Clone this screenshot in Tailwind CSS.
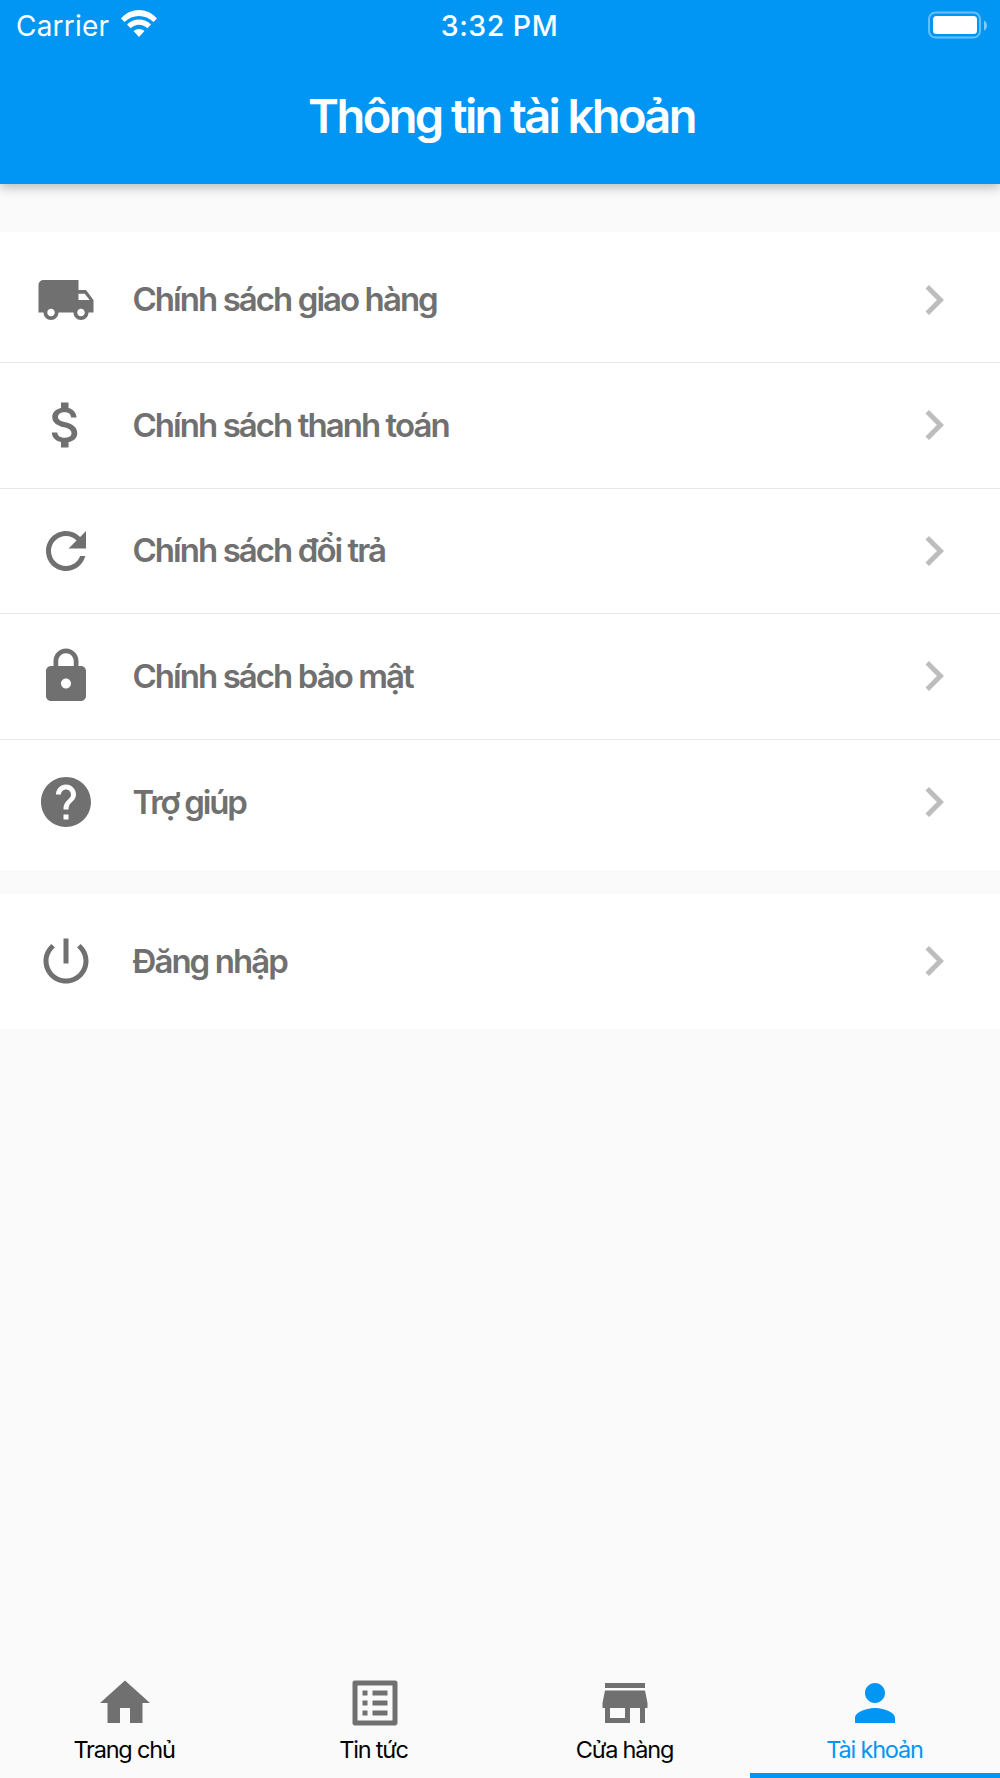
<!DOCTYPE html>
<html lang="vi">
<head>
<meta charset="utf-8">
<title>Thông tin tài khoản</title>
<script src="https://cdn.jsdelivr.net/npm/@tailwindcss/browser@4"></script>
</head>
<body class="w-[1000px] h-[1778px] overflow-hidden bg-[#fafafa] flex flex-col font-['Inter','Roboto',sans-serif] text-[#707070]">
  <header class="h-[183.5px] shrink-0 bg-[#0196f3] text-white shadow-[0_4px_10px_rgba(0,0,0,0.24)] flex flex-col">
    <div class="h-[48px] grid grid-cols-3 items-center pl-[16px] pr-[13px]">
      <div class="flex items-center gap-3">
        <span class="text-[28px] leading-[48px] pt-px tracking-[0.2px]">Carrier</span>
        <svg class="w-[36px] h-[27px] -mt-[3px]" viewBox="0 0 36 27" fill="currentColor"><path d="M0 8.400C10-2.800 26-2.800 36 8.400L32.500 12C24.500 3.900 11.500 3.900 3.500 12ZM6 14.600C12.500 7.900 23.500 7.900 30 14.600L26.400 18.200C21.500 13.500 14.500 13.500 9.600 18.200ZM12.500 21C15.500 18.200 20.500 18.200 23.500 21L18 27Z"/></svg>
      </div>
      <div class="text-center pr-[4px] pt-[2px]"><span class="text-[28.5px] leading-[48px] font-medium tracking-[0.5px]">3:32 PM</span></div>
      <svg class="w-[60px] h-[28px] justify-self-end" viewBox="0 0 60 28"><rect x="2" y="1.500" width="51" height="25" rx="6.500" fill="none" stroke="#fff" stroke-opacity=".4" stroke-width="2"/><rect x="6" y="5" width="44" height="18" rx="3.500" fill="#fff"/><path d="M57 9.500q3 1.500 3 5t-3 5z" fill="#fff" fill-opacity=".5"/></svg>
    </div>
    <h1 class="text-center text-[47px] leading-[136px] font-[560] tracking-[-2.6px] pl-[3px]">Thông tin tài khoản</h1>
  </header>

  <main class="flex-1 pt-[48.500px]">
    <ul class="bg-white pt-[5.5px] h-[638px] text-[33px] font-semibold tracking-[-1.95px]">
      <li class="h-[125.500px] border-b border-[#e8e8e8] flex items-center pl-[36px] pr-[36.4px]">
        <svg class="size-[60px]" viewBox="0 0 24 24" fill="currentColor"><path d="M20 8h-3V4H3c-1.100 0-2 .9-2 2v11h2c0 1.660 1.340 3 3 3s3-1.340 3-3h6c0 1.660 1.340 3 3 3s3-1.340 3-3h2v-5l-3-4zM6 18.500c-.83 0-1.500-.67-1.500-1.500s.67-1.500 1.500-1.500 1.500.67 1.500 1.500-.67 1.500-1.500 1.500zm13.500-9l1.960 2.500H17V9.500h2.500zm-1.500 9c-.83 0-1.500-.67-1.500-1.500s.67-1.500 1.500-1.500 1.500.67 1.500 1.500-.67 1.500-1.500 1.500z"/></svg>
        <span class="ml-[36.5px]">Chính sách giao hàng</span>
        <svg class="size-[60px] ml-auto text-[#bdbdbd]" viewBox="0 0 24 24" fill="currentColor"><path d="M10 6L8.590 7.410 13.170 12l-4.580 4.590L10 18l6-6z"/></svg>
      </li>
      <li class="h-[125.500px] border-b border-[#e8e8e8] flex items-center pl-[36px] pr-[36.4px]">
        <svg class="size-[60px]" viewBox="0 0 24 24" fill="currentColor"><path d="M11.800 10.900c-2.270-.59-3-1.200-3-2.150 0-1.090 1.010-1.850 2.700-1.850 1.780 0 2.440.85 2.500 2.100h2.210c-.07-1.720-1.120-3.300-3.210-3.810V3h-3v2.160c-1.940.42-3.500 1.680-3.500 3.610 0 2.310 1.910 3.460 4.700 4.130 2.500.6 3 1.480 3 2.410 0 .69-.49 1.790-2.700 1.790-2.060 0-2.870-.92-2.980-2.100h-2.200c.12 2.190 1.760 3.420 3.680 3.830V21h3v-2.150c1.950-.37 3.500-1.500 3.500-3.550 0-2.840-2.430-3.810-4.700-4.400z"/></svg>
        <span class="ml-[36.5px]">Chính sách thanh toán</span>
        <svg class="size-[60px] ml-auto text-[#bdbdbd]" viewBox="0 0 24 24" fill="currentColor"><path d="M10 6L8.590 7.410 13.170 12l-4.580 4.590L10 18l6-6z"/></svg>
      </li>
      <li class="h-[125.500px] border-b border-[#e8e8e8] flex items-center pl-[36px] pr-[36.4px]">
        <svg class="size-[60px]" viewBox="0 0 24 24" fill="currentColor"><path d="M17.650 6.350C16.200 4.900 14.210 4 12 4c-4.420 0-7.990 3.580-7.990 8s3.570 8 7.990 8c3.730 0 6.840-2.550 7.730-6h-2.080c-.82 2.330-3.040 4-5.650 4-3.310 0-6-2.690-6-6s2.690-6 6-6c1.660 0 3.140.69 4.220 1.780L13 11h7V4l-2.350 2.350z"/></svg>
        <span class="ml-[36.5px]">Chính sách đổi trả</span>
        <svg class="size-[60px] ml-auto text-[#bdbdbd]" viewBox="0 0 24 24" fill="currentColor"><path d="M10 6L8.590 7.410 13.170 12l-4.580 4.590L10 18l6-6z"/></svg>
      </li>
      <li class="h-[125.500px] border-b border-[#e8e8e8] flex items-center pl-[36px] pr-[36.4px]">
        <svg class="size-[60px]" viewBox="0 0 24 24" fill="currentColor"><path d="M18 8h-1V6c0-2.760-2.240-5-5-5S7 3.240 7 6v2H6c-1.100 0-2 .9-2 2v10c0 1.100.9 2 2 2h12c1.100 0 2-.9 2-2V10c0-1.100-.9-2-2-2zm-6 9c-1.100 0-2-.9-2-2s.9-2 2-2 2 .9 2 2-.9 2-2 2zm3.100-9H8.900V6c0-1.710 1.390-3.100 3.100-3.100s3.100 1.390 3.100 3.100v2z"/></svg>
        <span class="ml-[36.5px]">Chính sách bảo mật</span>
        <svg class="size-[60px] ml-auto text-[#bdbdbd]" viewBox="0 0 24 24" fill="currentColor"><path d="M10 6L8.590 7.410 13.170 12l-4.580 4.590L10 18l6-6z"/></svg>
      </li>
      <li class="h-[125.500px] flex items-center pl-[36px] pr-[36.4px]">
        <svg class="size-[60px]" viewBox="0 0 24 24" fill="currentColor"><path d="M12 2C6.480 2 2 6.480 2 12s4.480 10 10 10 10-4.480 10-10S17.520 2 12 2zm1 17h-2v-2h2v2zm2.070-7.750l-.9.920C13.450 12.900 13 13.500 13 15h-2v-.5c0-1.100.45-2.100 1.170-2.830l1.240-1.260c.37-.36.59-.86.59-1.410 0-1.100-.9-2-2-2s-2 .9-2 2H8c0-2.210 1.790-4 4-4s4 1.790 4 4c0 .88-.36 1.680-.93 2.250z"/></svg>
        <span class="ml-[36.5px] tracking-[-2.2px]">Trợ giúp</span>
        <svg class="size-[60px] ml-auto text-[#bdbdbd]" viewBox="0 0 24 24" fill="currentColor"><path d="M10 6L8.590 7.410 13.170 12l-4.580 4.590L10 18l6-6z"/></svg>
      </li>
    </ul>
    <ul class="mt-[23.500px] bg-white h-[135.500px] text-[33px] font-semibold tracking-[-1.95px]">
      <li class="h-full flex items-center pl-[36px] pr-[36.4px]">
        <svg class="size-[60px]" viewBox="0 0 24 24" fill="currentColor"><path d="M13 3h-2v10h2V3zm4.830 2.170l-1.420 1.420C17.990 7.860 19 9.810 19 12c0 3.870-3.130 7-7 7s-7-3.130-7-7c0-2.190 1.010-4.140 2.580-5.420L6.170 5.170C4.230 6.820 3 9.260 3 12c0 4.970 4.030 9 9 9s9-4.030 9-9c0-2.740-1.230-5.180-3.170-6.830z"/></svg>
        <span class="ml-[36.5px]">Đăng nhập</span>
        <svg class="size-[60px] ml-auto text-[#bdbdbd]" viewBox="0 0 24 24" fill="currentColor"><path d="M10 6L8.590 7.410 13.170 12l-4.580 4.590L10 18l6-6z"/></svg>
      </li>
    </ul>
  </main>

  <nav class="h-[105px] shrink-0 grid grid-cols-4 text-[23.500px] leading-[34px] tracking-[-1.2px]">
    <a class="flex flex-col items-center">
      <svg class="size-[60px]" viewBox="0 0 24 24" fill="currentColor"><path d="M10 20v-6h4v6h5v-8h3L12 3 2 12h3v8z"/></svg>
      <span class="mr-[2px] text-black">Trang chủ</span>
    </a>
    <a class="flex flex-col items-center">
      <svg class="size-[60px]" viewBox="0 0 24 24" fill="currentColor"><path d="M19 5v14H5V5h14m1.100-2H3.900c-.5 0-.9.400-.9.900v16.200c0 .4.400.9.900.9h16.200c.4 0 .9-.5.900-.9V3.900c0-.5-.5-.9-.9-.9zM11 7h6v2h-6V7zm0 4h6v2h-6v-2zm0 4h6v2h-6zM7 7h2v2H7zm0 4h2v2H7zm0 4h2v2H7z"/></svg>
      <span class="mr-[3px] text-black">Tin tức</span>
    </a>
    <a class="flex flex-col items-center">
      <svg class="size-[60px]" viewBox="0 0 24 24" fill="currentColor"><path d="M20 4H4v2h16V4zm1 10v-2l-1-5H4l-1 5v2h1v6h10v-6h4v6h2v-6h1zm-9 4H6v-4h6v4z"/></svg>
      <span class="mr-px text-black">Cửa hàng</span>
    </a>
    <a class="flex flex-col items-center border-b-[5px] border-[#0196f3] text-[#0196f3]">
      <svg class="size-[60px] shrink-0" viewBox="0 0 24 24" fill="currentColor"><path d="M12 12c2.210 0 4-1.790 4-4s-1.790-4-4-4-4 1.790-4 4 1.790 4 4 4zm0 2c-2.670 0-8 1.340-8 4v2h16v-2c0-2.660-5.330-4-8-4z"/></svg>
      <span class="mr-px">Tài khoản</span>
    </a>
  </nav>
</body>
</html>
